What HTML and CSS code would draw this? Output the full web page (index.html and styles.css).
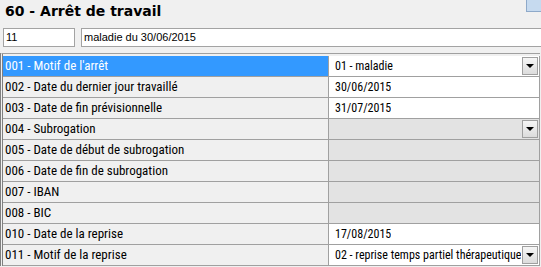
FILE: index.html
```html
<!DOCTYPE html>
<html lang="fr">
<head>
    <meta charset="UTF-8">
    <title>Arrêt de travail</title>
    <link rel="stylesheet" href="styles.css">
</head>
<body>
    <div class="title-bar">
        <h1 class="title">60 - Arrêt de travail</h1>
        <div class="corner-btn"></div>
    </div>

    <div class="header-row">
        <input class="field field-code" type="text" value="11" readonly>
        <input class="field field-label" type="text" value="maladie du 30/06/2015" readonly>
    </div>

    <div class="grid">
        <div class="row row-selected">
            <div class="cell-label">001 - Motif de l'arrêt</div>
            <div class="cell-value"><span class="value-text">01 - maladie</span><span class="drop-btn"></span></div>
        </div>
        <div class="row">
            <div class="cell-label">002 - Date du dernier jour travaillé</div>
            <div class="cell-value"><span class="value-text">30/06/2015</span></div>
        </div>
        <div class="row">
            <div class="cell-label">003 - Date de fin prévisionnelle</div>
            <div class="cell-value"><span class="value-text">31/07/2015</span></div>
        </div>
        <div class="row">
            <div class="cell-label">004 - Subrogation</div>
            <div class="cell-value cell-disabled"><span class="drop-btn"></span></div>
        </div>
        <div class="row">
            <div class="cell-label">005 - Date de début de subrogation</div>
            <div class="cell-value cell-disabled"></div>
        </div>
        <div class="row">
            <div class="cell-label">006 - Date de fin de subrogation</div>
            <div class="cell-value cell-disabled"></div>
        </div>
        <div class="row">
            <div class="cell-label">007 - IBAN</div>
            <div class="cell-value cell-disabled"></div>
        </div>
        <div class="row">
            <div class="cell-label">008 - BIC</div>
            <div class="cell-value cell-disabled"></div>
        </div>
        <div class="row">
            <div class="cell-label">010 - Date de la reprise</div>
            <div class="cell-value"><span class="value-text">17/08/2015</span></div>
        </div>
        <div class="row">
            <div class="cell-label">011 - Motif de la reprise</div>
            <div class="cell-value"><span class="value-text">02 - reprise temps partiel thérapeutique</span><span class="drop-btn"></span></div>
        </div>
    </div>
</body>
</html>
```

FILE: styles.css
```css
* {
    margin: 0;
    padding: 0;
    box-sizing: border-box;
}

body {
    background: #f0f0f0;
    font-family: "Liberation Sans", Arial, sans-serif;
    color: #000;
    overflow: hidden;
}

.title-bar {
    display: flex;
    justify-content: space-between;
    align-items: flex-start;
    height: 25px;
}

.title {
    font-family: "DejaVu Sans", sans-serif;
    font-size: 14px;
    font-weight: bold;
    line-height: 20px;
    padding: 1px 0 0 5px;
}

.corner-btn {
    width: 15px;
    height: 12px;
    background: #c6daef;
    border-left: 1px solid #8ea9c9;
    border-bottom: 1px solid #8ea9c9;
}

.header-row {
    display: flex;
    gap: 6px;
    margin-top: 3px;
    padding-left: 3px;
    overflow: hidden;
}

.field {
    height: 19px;
    border: 1px solid #a3a3a3;
    background: #fff;
    font-family: "Liberation Sans", Arial, sans-serif;
    font-size: 11px;
    padding: 0 2px 2px;
    outline: none;
}

.field-code {
    width: 72px;
}

.field-label {
    flex: 1;
    margin-right: -10px;
}

.grid {
    margin-top: 6px;
    width: 540px;
    border-top: 1px solid #a0a0a0;
    border-left: 3px double #808080;
    padding-top: 2px;
    font-family: "Roboto Condensed", "Liberation Sans Narrow", "Open Sans", sans-serif;
    font-stretch: 75%;
    font-size: 13px;
}

.row {
    display: flex;
    height: 21px;
    border-bottom: 1px solid #a0a0a0;
    line-height: 20px;
}

.cell-label {
    width: 326px;
    padding-left: 2px;
    border-right: 1px solid #a0a0a0;
    background: #f0f0f0;
    white-space: nowrap;
}

.cell-value {
    display: flex;
    align-items: flex-start;
    width: 211px;
    padding-left: 6px;
    border-right: 1px solid #a0a0a0;
    background: #fff;
    white-space: nowrap;
}

.value-text {
    overflow: hidden;
    font-size: 12px;
    line-height: 21px;
}

.cell-disabled {
    background: #e3e3e3;
}

.row-selected .cell-label {
    background: #3399ff;
    color: #fff;
}

.drop-btn {
    display: flex;
    flex-shrink: 0;
    align-items: center;
    justify-content: center;
    width: 16px;
    height: 18px;
    margin: 1px 1px 0 auto;
    border: 1px solid #a0a0a0;
    background: linear-gradient(#f6f6f6, #dcdcdc);
}

.drop-btn::after {
    content: "";
    border-left: 4px solid transparent;
    border-right: 4px solid transparent;
    border-top: 4px solid #000;
}
```
